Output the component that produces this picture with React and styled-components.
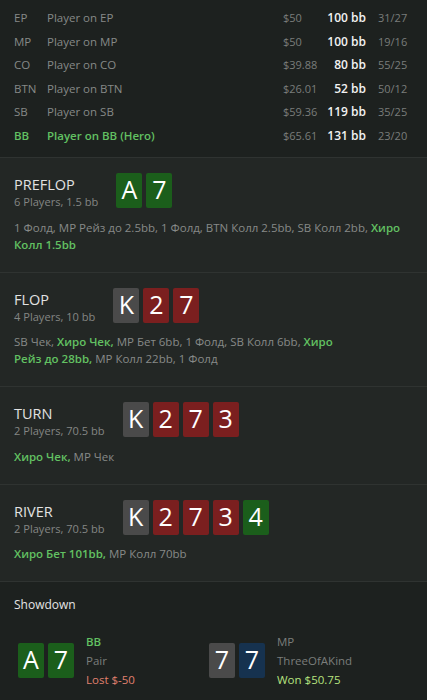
import React from 'react';
import styled, { createGlobalStyle } from 'styled-components';

const GlobalStyle = createGlobalStyle`
  html, body {
    margin: 0;
    padding: 0;
    background: #1d211f;
  }
  body {
    font-family: "Open Sans", "Noto Sans", sans-serif;
    font-size: 11.5px;
    color: #8b8e8c;
  }
`;

const Page = styled.div`
  width: 427px;
  background: #1d211f;
`;

const PlayersTable = styled.div`
  padding: 6px 14px 10px 14px;
  border-bottom: 1px solid #2f3331;
`;

const PlayerRow = styled.div`
  display: grid;
  grid-template-columns: 33px 1fr 42px 41px 47px;
  height: 23.5px;
  align-items: center;
  white-space: nowrap;
  color: ${(p) => (p.$hero ? '#62c162' : '#868987')};
  font-weight: ${(p) => (p.$hero ? 600 : 400)};
`;

const Money = styled.span`
  color: #7a7d7b;
  font-weight: 400;
  font-size: 11px;
`;

const Stack = styled.span`
  color: #f2f2f2;
  font-weight: 600;
  font-size: 12px;
  text-align: right;
`;

const Stats = styled.span`
  color: #7a7d7b;
  font-weight: 400;
  font-size: 11px;
  padding-left: 12px;
`;

const Street = styled.section`
  background: #232725;
  border-bottom: 1px solid #2f3331;
  padding: 15px 14px 19px 14px;
`;

const StreetHead = styled.div`
  display: flex;
  align-items: flex-start;
  gap: 18px;
`;

const StreetInfo = styled.div`
  display: flex;
  flex-direction: column;
  padding-top: 2px;
`;

const StreetTitle = styled.div`
  font-size: 14.5px;
  line-height: 19px;
  color: #e2e2e2;
`;

const StreetSub = styled.div`
  font-size: 11.1px;
  line-height: 16px;
  color: #838684;
`;

const Cards = styled.div`
  display: flex;
  gap: 4px;
`;

const cardColors = {
  green: '#1b5e1b',
  red: '#7b1f1f',
  grey: '#4a4a4a',
  blue: '#16324f',
};

const Card = styled.div`
  width: 26px;
  height: 35px;
  border-radius: 2px;
  background: ${(p) => cardColors[p.$color]};
  color: #ffffff;
  font-size: 25px;
  line-height: 32px;
  text-align: center;
`;

const Actions = styled.div`
  margin-top: 8.5px;
  line-height: 17px;
  color: #878a88;
  padding-right: 8px;
`;

const Hero = styled.span`
  color: #62c162;
  font-weight: 600;
`;

const Showdown = styled.section`
  background: #1d211f;
  padding: 15px 14px 20px 14px;
`;

const ShowdownTitle = styled.div`
  color: #e4e4e4;
  font-size: 12px;
  line-height: 16px;
`;

const ShowdownHands = styled.div`
  display: grid;
  grid-template-columns: 191px 1fr;
  margin-top: 19px;
  padding-left: 4px;
`;

const Hand = styled.div`
  display: flex;
  align-items: center;
  gap: 12px;
`;

const HandInfo = styled.div`
  display: flex;
  flex-direction: column;
  line-height: 19.2px;
  white-space: nowrap;
`;

const HandPos = styled.span`
  color: ${(p) => (p.$hero ? '#62c162' : '#7a7d7b')};
  font-weight: ${(p) => (p.$hero ? 600 : 400)};
`;

const HandName = styled.span`
  color: #7a7d7b;
`;

const Result = styled.span`
  color: ${(p) => (p.$won ? '#b6e37e' : '#e0806e')};
`;

const players = [
  { pos: 'EP', name: 'Player on EP', money: '$50', bb: '100 bb', stats: '31/27' },
  { pos: 'MP', name: 'Player on MP', money: '$50', bb: '100 bb', stats: '19/16' },
  { pos: 'CO', name: 'Player on CO', money: '$39.88', bb: '80 bb', stats: '55/25' },
  { pos: 'BTN', name: 'Player on BTN', money: '$26.01', bb: '52 bb', stats: '50/12' },
  { pos: 'SB', name: 'Player on SB', money: '$59.36', bb: '119 bb', stats: '35/25' },
  { pos: 'BB', name: 'Player on BB (Hero)', money: '$65.61', bb: '131 bb', stats: '23/20', hero: true },
];

// nbsp keeps each action phrase on one line, like the source log
const nb = (s) => s.replace(/ /g, '\u00a0');

const streets = [
  {
    title: 'PREFLOP',
    sub: '6 Players, 1.5 bb',
    cards: [['A', 'green'], ['7', 'green']],
    actions: [
      ['1 Фолд, MP Рейз до 2.5bb, 1 Фолд, BTN Колл 2.5bb, SB Колл 2bb, '],
      ['Хиро ' + nb('Колл 1.5bb'), true],
    ],
  },
  {
    title: 'FLOP',
    sub: '4 Players, 10 bb',
    cards: [['K', 'grey'], ['2', 'red'], ['7', 'red']],
    actions: [
      ['SB Чек, '],
      ['Хиро Чек,', true],
      [' MP Бет 6bb, 1 Фолд, SB Колл 6bb, '],
      ['Хиро ' + nb('Рейз до 28bb,'), true],
      [' MP Колл 22bb, 1 Фолд'],
    ],
  },
  {
    title: 'TURN',
    sub: '2 Players, 70.5 bb',
    cards: [['K', 'grey'], ['2', 'red'], ['7', 'red'], ['3', 'red']],
    actions: [['Хиро Чек,', true], [' MP Чек']],
  },
  {
    title: 'RIVER',
    sub: '2 Players, 70.5 bb',
    cards: [['K', 'grey'], ['2', 'red'], ['7', 'red'], ['3', 'red'], ['4', 'green']],
    actions: [['Хиро Бет 101bb,', true], [' MP Колл 70bb']],
  },
];

export default function App() {
  return (
    <Page>
      <GlobalStyle />
      <PlayersTable>
        {players.map((p) => (
          <PlayerRow key={p.pos} $hero={p.hero}>
            <span>{p.pos}</span>
            <span>{p.name}</span>
            <Money>{p.money}</Money>
            <Stack>{p.bb}</Stack>
            <Stats>{p.stats}</Stats>
          </PlayerRow>
        ))}
      </PlayersTable>

      {streets.map((s) => (
        <Street key={s.title}>
          <StreetHead>
            <StreetInfo>
              <StreetTitle>{s.title}</StreetTitle>
              <StreetSub>{s.sub}</StreetSub>
            </StreetInfo>
            <Cards>
              {s.cards.map(([rank, color], i) => (
                <Card key={i} $color={color}>{rank}</Card>
              ))}
            </Cards>
          </StreetHead>
          <Actions>
            {s.actions.map(([text, hero], i) =>
              hero ? <Hero key={i}>{text}</Hero> : <span key={i}>{text}</span>
            )}
          </Actions>
        </Street>
      ))}

      <Showdown>
        <ShowdownTitle>Showdown</ShowdownTitle>
        <ShowdownHands>
          <Hand>
            <Cards>
              <Card $color="green">A</Card>
              <Card $color="green">7</Card>
            </Cards>
            <HandInfo>
              <HandPos $hero>BB</HandPos>
              <HandName>Pair</HandName>
              <Result>Lost $-50</Result>
            </HandInfo>
          </Hand>
          <Hand>
            <Cards>
              <Card $color="grey">7</Card>
              <Card $color="blue">7</Card>
            </Cards>
            <HandInfo>
              <HandPos>MP</HandPos>
              <HandName>ThreeOfAKind</HandName>
              <Result $won>Won $50.75</Result>
            </HandInfo>
          </Hand>
        </ShowdownHands>
      </Showdown>
    </Page>
  );
}
